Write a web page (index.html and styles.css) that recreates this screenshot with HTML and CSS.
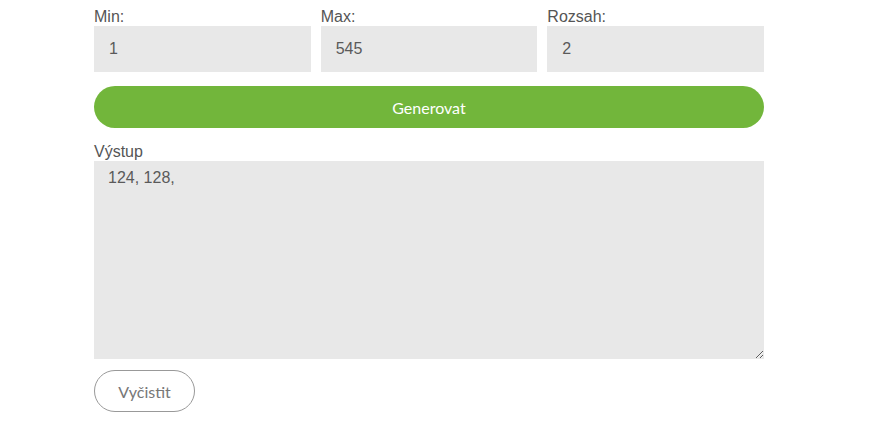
FILE: index.html
```html
<!DOCTYPE html>
<html lang="cs">
<head>
<meta charset="utf-8">
<link rel="stylesheet" href="styles.css">
</head>
<body>
<div class="wrap">
  <div class="row">
    <div class="field">
      <label class="lbl">Min:</label>
      <div class="input">1</div>
    </div>
    <div class="field">
      <label class="lbl">Max:</label>
      <div class="input">545</div>
    </div>
    <div class="field">
      <label class="lbl">Rozsah:</label>
      <div class="input">2</div>
    </div>
  </div>
  <button class="btn-gen">Generovat</button>
  <label class="lbl">Výstup</label>
  <textarea class="out">124, 128, </textarea>
  <button class="btn-clear">Vyčistit</button>
</div>
</body>
</html>
```
FILE: styles.css
```css
html, body { margin: 0; padding: 0; background: #fff; }
body { font-family: "Liberation Sans", Arial, sans-serif; color: #555; }
.wrap { width: 670px; margin-left: 94px; padding-top: 7px; display: flex; flex-direction: column; }
.row { display: flex; gap: 10px; }
.field { flex: 1; display: flex; flex-direction: column; }
.lbl { display: block; font-size: 16px; line-height: 19px; color: #555; }
.input { height: 46px; background: #e8e8e8; box-sizing: border-box; padding: 0 15px; font-size: 16px; line-height: 46px; color: #5a5a5a; }
.btn-gen { margin-top: 14px; margin-bottom: 14px; height: 42px; border: 0; border-radius: 21px; background: #72b63b; color: #fff; font-family: Lato, "Open Sans", sans-serif; font-size: 16px; cursor: pointer; }
.out { display: block; margin-top: 0; width: 670px; height: 198px; box-sizing: border-box; border: 0; background: #e8e8e8; padding: 8px 14px; font-family: "Liberation Sans", Arial, sans-serif; font-size: 16px; color: #5a5a5a; resize: vertical; outline: none; }
.btn-clear { align-self: flex-start; margin-top: 11px; width: 101px; height: 42px; border: 1px solid #999; border-radius: 21px; background: #fff; color: #777; font-family: Lato, "Open Sans", sans-serif; font-size: 16px; }
```
